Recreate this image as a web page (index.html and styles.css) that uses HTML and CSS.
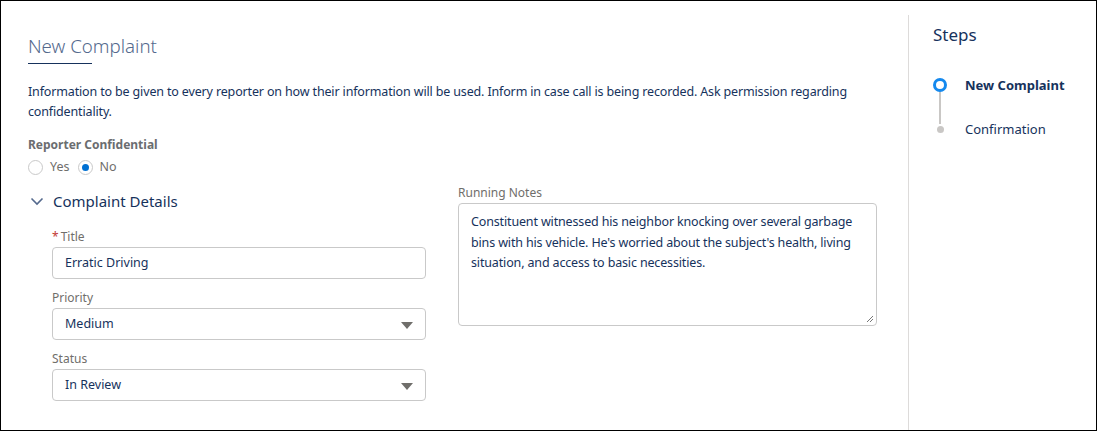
FILE: index.html
```html
<!DOCTYPE html>
<html lang="en">

<head>
  <meta charset="UTF-8">
  <meta name="viewport" content="width=device-width, initial-scale=1.0">
  <title>New Complaint</title>
  <link rel="stylesheet" href="styles.css">
</head>

<body>

  <div class="flow_frame">
    <div class="flow_main">
      <h1 class="page_title">New Complaint</h1>

      <p class="intro">Information to be given to every reporter on how their information will be used. Inform in case call is being recorded. Ask permission regarding confidentiality.</p>

      <div class="radio_group">
        <div class="group_label">Reporter Confidential</div>
        <div class="radio_row">
          <label class="radio"><span class="radio_mark"></span>Yes</label>
          <label class="radio"><span class="radio_mark checked"></span>No</label>
        </div>
      </div>

      <div class="columns">
        <div class="details">
          <div class="section_header">
            <svg class="chevron" width="14" height="14" viewBox="0 0 14 14">
              <path d="M1.5 4.5 L7 10 L12.5 4.5" fill="none" stroke="#54698d" stroke-width="1.6" />
            </svg>
            <span>Complaint Details</span>
          </div>

          <div class="fields">
            <div class="field">
              <div class="field_label"><span class="required">*</span>Title</div>
              <div class="input">Erratic Driving</div>
            </div>
            <div class="field">
              <div class="field_label">Priority</div>
              <div class="input select">Medium<span class="caret"></span></div>
            </div>
            <div class="field">
              <div class="field_label">Status</div>
              <div class="input select">In Review<span class="caret"></span></div>
            </div>
          </div>
        </div>

        <div class="notes">
          <div class="field_label">Running Notes</div>
          <div class="textarea">
            Constituent witnessed his neighbor knocking over several garbage bins with his vehicle. He's worried about the subject's health, living situation, and access to basic necessities.
            <svg class="grip" width="8" height="8" viewBox="0 0 8 8">
              <path d="M7 1 L1 7 M7 4 L4 7" stroke="#777" stroke-width="1" />
            </svg>
          </div>
        </div>
      </div>
    </div>

    <div class="flow_steps">
      <h2 class="steps_title">Steps</h2>
      <ul class="step_list">
        <li class="step active"><span class="step_marker"></span>New Complaint</li>
        <li class="step"><span class="step_marker"></span>Confirmation</li>
      </ul>
    </div>
  </div>

</body>

</html>
```

FILE: styles.css
```css
body {
  margin: 0;
  font-family: "Noto Sans", "Open Sans", sans-serif;
  color: #16325c;
  background: #fff;
}

.flow_frame {
  display: flex;
  width: 1097px;
  height: 431px;
  box-sizing: border-box;
  border: 1px solid #000;
}

.flow_main {
  width: 907px;
  box-sizing: border-box;
  padding: 33px 30px 0 27px;
}

.page_title {
  margin: 0;
  font-size: 18.7px;
  font-weight: 300;
  line-height: 24px;
  color: #54698d;
}

.page_title::after {
  content: "";
  display: block;
  width: 64px;
  height: 1px;
  margin-top: 5px;
  background: #16325c;
}

.intro {
  margin: 18px 0 0;
  font-size: 12.5px;
  letter-spacing: -0.15px;
  line-height: 20px;
  color: #16325c;
}

.radio_group {
  margin-top: 14px;
}

.group_label {
  font-size: 12px;
  font-weight: 700;
  line-height: 18px;
  color: #6b6d70;
}

.radio_row {
  display: flex;
  gap: 8px;
  margin-top: 4px;
  font-size: 12.5px;
  line-height: 18px;
  color: #706e6b;
}

.radio {
  display: flex;
  align-items: center;
  gap: 7px;
}

.radio_mark {
  width: 15px;
  height: 15px;
  box-sizing: border-box;
  border: 1px solid #c9c9c9;
  border-radius: 50%;
  background: #fff;
  display: flex;
  align-items: center;
  justify-content: center;
}

.radio_mark.checked::after {
  content: "";
  width: 7px;
  height: 7px;
  border-radius: 50%;
  background: #0070d2;
}

.columns {
  display: grid;
  grid-template-columns: 398px 419px;
  column-gap: 32px;
  margin-top: 8px;
}

.section_header {
  display: flex;
  align-items: center;
  gap: 9px;
  margin-top: 5px;
  padding-left: 2px;
  font-size: 15px;
  line-height: 24px;
}

.chevron {
  display: block;
}

.fields {
  padding-left: 24px;
  margin-top: 15px;
}

.field {
  margin-bottom: 10px;
}

.field_label {
  font-size: 12px;
  line-height: 18px;
  color: #706e6b;
  margin-bottom: 1px;
}

.required {
  color: #c23934;
  margin-right: 2px;
}

.input {
  position: relative;
  height: 32px;
  box-sizing: border-box;
  border: 1px solid #c9c9c9;
  border-radius: 4px;
  padding: 0 12px;
  font-size: 12.5px;
  line-height: 30px;
  color: #16325c;
}

.caret {
  position: absolute;
  right: 12px;
  top: 13px;
  width: 0;
  height: 0;
  border-left: 6px solid transparent;
  border-right: 6px solid transparent;
  border-top: 7px solid #706e6b;
}

.textarea {
  position: relative;
  height: 123px;
  box-sizing: border-box;
  border: 1px solid #c9c9c9;
  border-radius: 4px;
  padding: 8px 20px 0 12px;
  font-size: 12.5px;
  letter-spacing: -0.15px;
  line-height: 20.5px;
  color: #16325c;
}

.grip {
  position: absolute;
  right: 2px;
  bottom: 2px;
}

.flow_steps {
  flex: 1;
  margin-top: 14px;
  border-left: 1px solid #dddbda;
  padding-left: 24px;
}

.steps_title {
  margin: 8px 0 0;
  font-size: 17px;
  font-weight: 400;
  line-height: 24px;
  color: #16325c;
}

.step_list {
  list-style: none;
  margin: 28px 0 0;
  padding: 0;
}

.step {
  position: relative;
  display: flex;
  align-items: center;
  height: 20px;
  margin-bottom: 24px;
  font-size: 13px;
  color: #16325c;
}

.step_marker {
  width: 14px;
  margin-right: 18px;
  display: flex;
  justify-content: center;
}

.step_marker::before {
  content: "";
  width: 7px;
  height: 7px;
  border-radius: 50%;
  background: #c9c7c5;
}

.step.active {
  font-weight: 700;
}

.step.active .step_marker::before {
  width: 14px;
  height: 14px;
  box-sizing: border-box;
  border: 3.5px solid #1589ee;
  background: #fff;
}

.step.active::after {
  content: "";
  position: absolute;
  left: 6px;
  top: 17px;
  width: 2px;
  height: 32px;
  background: #c9c7c5;
}
```
